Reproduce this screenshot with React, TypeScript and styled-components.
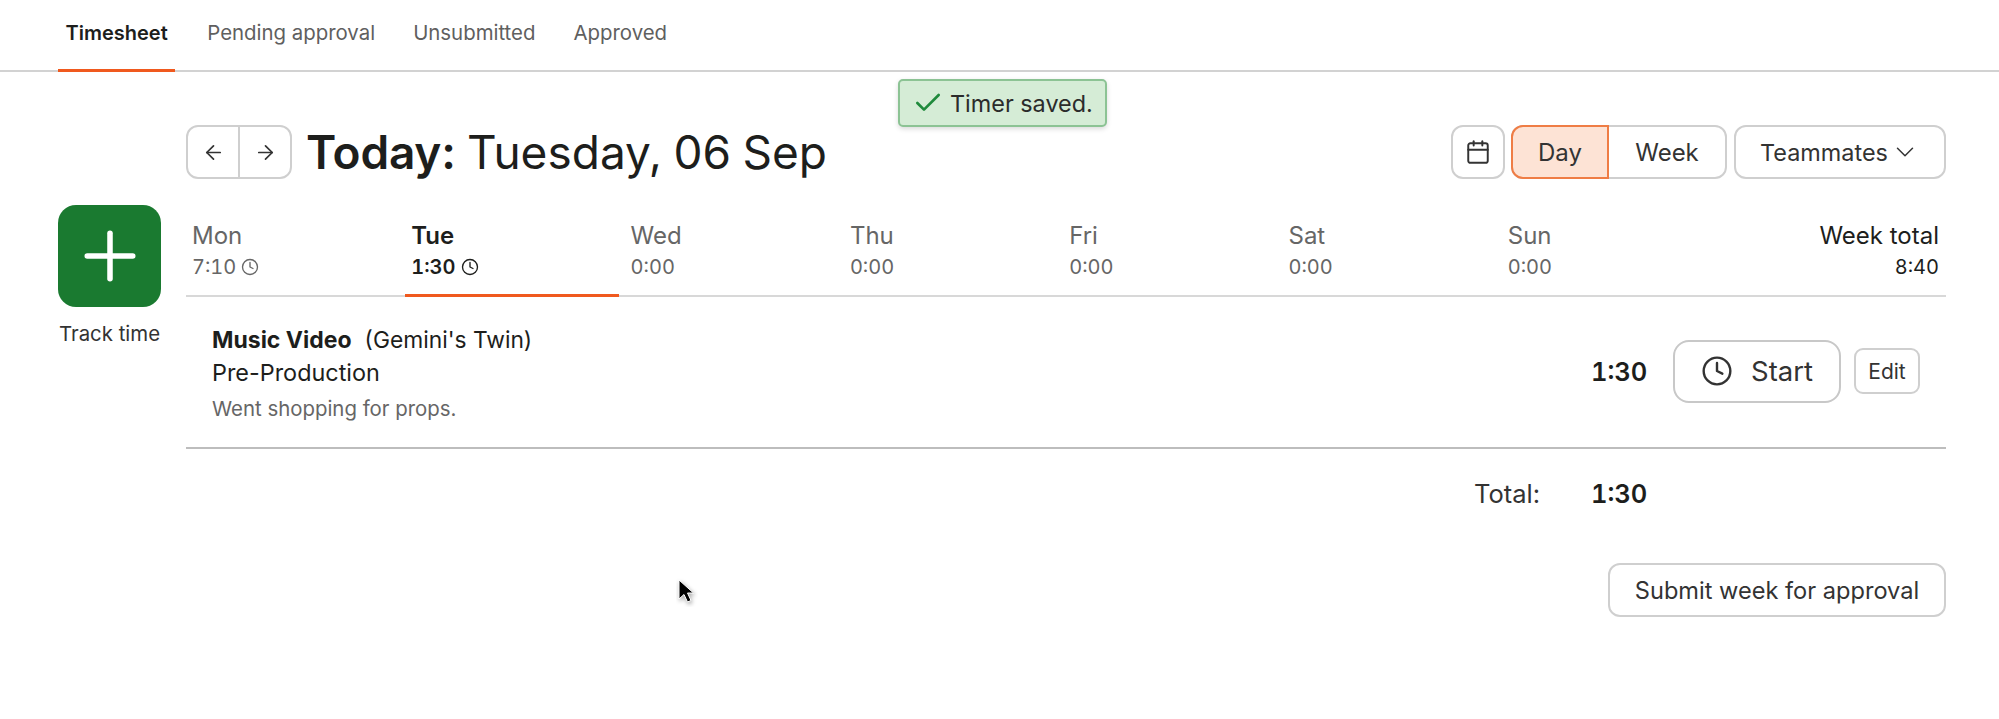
import React from "react";
import styled, { createGlobalStyle } from "styled-components";
import { ArrowLeft, ArrowRight, Calendar, Check, ChevronDown, Clock, Plus } from "lucide-react";

const Global = createGlobalStyle`
  html, body { margin: 0; padding: 0; background: #fff; }
  body { font-family: Inter, "Liberation Sans", sans-serif; color: #1d1e1c; width: 1999px; height: 719px; overflow: hidden; position: relative; }
  button { font-family: inherit; color: inherit; }
`;
const Tabs = styled.nav`
  height: 70px; padding-left: 58px; display: flex; align-items: stretch; border-bottom: 2px solid #d2d2d2; box-sizing: content-box;
`;
const Tab = styled.a<{ $active?: boolean }>`
  padding: 0 ${p => (p.$active ? 7.5 : 19)}px; height: 72px; margin-right: ${p => (p.$active ? 13 : 0)}px;
  display: flex; align-items: center; justify-content: center; padding-bottom: 4px; box-sizing: border-box;
  font-size: ${p => (p.$active ? 20 : 20.4)}px; font-weight: ${p => (p.$active ? 600 : 400)}; color: ${p => (p.$active ? "#1d1e1c" : "#5f5f5f")};
  border-bottom: 3px solid ${p => (p.$active ? "#f0591e" : "transparent")};
`;
const Toast = styled.div`
  position: absolute; left: 898px; top: 79px; width: 209px; height: 48px; box-sizing: border-box;
  display: flex; align-items: center; gap: 6px; padding-left: 12px; font-size: 23.4px; color: #2b2b2b;
  background: #d5ecd6; border: 2px solid #8cc394; border-radius: 5px; box-shadow: 0 2px 5px rgba(0,0,0,.15);
`;
const Body = styled.main`
  display: flex; gap: 25px; padding: 0 53px 0 58px;
`;
const Side = styled.aside`
  width: 103px; padding-top: 133px; display: flex; flex-direction: column; align-items: center; flex: none;
`;
const TrackButton = styled.button`
  width: 103px; height: 102px; border: 0; padding: 0; border-radius: 18px; background: #1a7a30; color: #fff; display: flex; align-items: center; justify-content: center;
`;
const TrackLabel = styled.div`
  margin-top: 14px; font-size: 20.4px; color: #333; white-space: nowrap;
`;
const Content = styled.section`
  flex: 1; padding-top: 53px; min-width: 0;
`;
const Header = styled.header`
  display: flex; align-items: center; height: 54px;
`;
const Group = styled.div`
  display: flex; height: 54px; border: 2px solid #cfcfcf; border-radius: 12px; box-sizing: border-box; background: #fff;
`;
const NavBtn = styled.button<{ $first?: boolean }>`
  width: ${p => (p.$first ? 50 : 52)}px; flex: none; border: 0; background: transparent; display: flex; align-items: center; justify-content: center; padding: 0; color: #333;
  & + & { border-left: 2px solid #cfcfcf; }
`;
const Title = styled.h1`
  margin: 0 0 0 14px; font-size: 46px; font-weight: 400; word-spacing: -1.5px; white-space: nowrap; flex: 1; color: #1d1e1c;
  strong { font-weight: 600; letter-spacing: -0.2px; }
`;
const IconBtn = styled.button`
  width: 54px; height: 54px; border: 2px solid #cfcfcf; border-radius: 12px; background: #fff; display: flex; align-items: center; justify-content: center; padding: 0; margin-right: 6px; color: #333;
`;
const Seg = styled.button<{ $active?: boolean }>`
  height: 54px; margin: -2px 0 -2px ${p => (p.$active ? -2 : 0)}px; width: ${p => (p.$active ? 98 : 116)}px; font-size: 24px; padding: 0; box-sizing: border-box;
  border: 2px solid ${p => (p.$active ? "#ef7d45" : "transparent")}; border-radius: ${p => (p.$active ? "12px 0 0 12px" : "0 12px 12px 0")};
  background: ${p => (p.$active ? "#fde3d5" : "transparent")}; color: #333;
`;
const Dropdown = styled.button`
  width: 212px; height: 54px; margin-left: 7px; border: 2px solid #cfcfcf; border-radius: 12px; background: #fff; font-size: 23.4px;
  display: flex; align-items: center; justify-content: center; gap: 0; padding: 0; color: #333;
  svg { margin-left: 2px; }
`;
const Days = styled.div`
  margin-top: 24px; display: flex; height: 92px; border-bottom: 2px solid #d8d8d8; box-sizing: content-box;
`;
const Day = styled.div<{ $active?: boolean }>`
  width: 219.3px; box-sizing: border-box; padding: 19px 0 0 6px; height: 94px; margin-bottom: -2px; flex: none; position: relative;
  color: ${p => (p.$active ? "#1d1e1c" : "#666")};
  font-weight: ${p => (p.$active ? 600 : 400)};
  ${p => p.$active && `&::after { content: ""; position: absolute; left: 0; right: 6px; bottom: 0; height: 3px; background: #f0591e; }`}
`;
const DayName = styled.div`
  font-size: 24px; line-height: 28px;
`;
const DayTime = styled.div<{ $end?: boolean }>`
  margin-top: 5px; font-size: 20px; line-height: 24px; display: flex; align-items: center; gap: 5px;
  font-variant-numeric: tabular-nums;
  justify-content: ${p => (p.$end ? "flex-end" : "flex-start")};
`;
const WeekTotal = styled.div`
  flex: 1; text-align: right; padding: 19px 7px 0 0; color: #1d1e1c;
`;
const Entry = styled.div`
  display: flex; align-items: center; height: 148px; padding: 0 26px 2px; border-bottom: 2px solid #bdbdbd;
`;
const EntryText = styled.div`
  flex: 1; padding-top: 4px;
`;
const ProjectLine = styled.div`
  font-size: 22.8px; line-height: 30px; strong { font-weight: 700; font-size: 23px; margin-right: 13px; }
`;
const TaskLine = styled.div`
  font-size: 23.4px; line-height: 30px; margin-top: 3px;
`;
const NoteLine = styled.div`
  font-size: 20.4px; line-height: 26px; margin-top: 8px; color: #666;
`;
const Hours = styled.div`
  font-size: 25.5px; font-weight: 600; width: 56px; text-align: left; white-space: nowrap; font-variant-numeric: tabular-nums;
`;
const StartBtn = styled.button`
  margin-left: 26px; width: 168px; height: 63px; border: 2px solid #c8c8c8; border-radius: 16px; background: #fff; font-size: 27.5px;
  display: flex; align-items: center; justify-content: center; gap: 18px; padding: 0; color: #333;
`;
const EditBtn = styled.button`
  margin-left: 13px; width: 66px; height: 46px; border: 2px solid #cfcfcf; border-radius: 9px; background: #fff; font-size: 21px; padding: 0; color: #333;
`;
const TotalRow = styled.div`
  display: flex; justify-content: flex-end; align-items: center; padding: 29px 299px 0 0; height: 30px;
`;
const TotalLabel = styled.div`
  font-size: 25.5px; width: 117px; color: #333;
`;
const Footer = styled.div`
  margin-top: 55px; display: flex; justify-content: flex-end;
`;
const Submit = styled.button`
  width: 338px; height: 54px; border: 2px solid #cfcfcf; border-radius: 12px; background: #fff; font-size: 23.6px; padding: 0; color: #333;
`;
const Cursor = styled.svg`
  position: absolute; left: 676px; top: 577px;
`;

const days = [
  ["Mon", "7:10", true], ["Tue", "1:30", true], ["Wed", "0:00"], ["Thu", "0:00"], ["Fri", "0:00"], ["Sat", "0:00"], ["Sun", "0:00"],
] as const;

export default function App() {
  return (
    <>
      <Global />
      <Tabs>
        <Tab $active>Timesheet</Tab>
        <Tab>Pending approval</Tab>
        <Tab>Unsubmitted</Tab>
        <Tab>Approved</Tab>
      </Tabs>
      <Toast><Check size={32} color="#1f8a3c" strokeWidth={2} />Timer saved.</Toast>
      <Body>
        <Side>
          <TrackButton aria-label="Track time"><Plus size={78} strokeWidth={1.7} /></TrackButton>
          <TrackLabel>Track time</TrackLabel>
        </Side>
        <Content>
          <Header>
            <Group>
              <NavBtn $first aria-label="Previous"><ArrowLeft size={23} strokeWidth={1.8} /></NavBtn>
              <NavBtn aria-label="Next"><ArrowRight size={23} strokeWidth={1.8} /></NavBtn>
            </Group>
            <Title><strong>Today:</strong> Tuesday, 06 Sep</Title>
            <IconBtn aria-label="Calendar"><Calendar size={26} strokeWidth={1.8} /></IconBtn>
            <Group>
              <Seg $active>Day</Seg>
              <Seg>Week</Seg>
            </Group>
            <Dropdown>Teammates <ChevronDown size={30} strokeWidth={1.2} /></Dropdown>
          </Header>
          <Days>
            {days.map(([name, time, clock], i) => (
              <Day key={name} $active={i === 1}>
                <DayName>{name}</DayName>
                <DayTime>{time}{clock && <Clock size={18} strokeWidth={1.8} />}</DayTime>
              </Day>
            ))}
            <WeekTotal>
              <DayName>Week total</DayName>
              <DayTime $end>8:40</DayTime>
            </WeekTotal>
          </Days>
          <Entry>
            <EntryText>
              <ProjectLine><strong>Music Video</strong>(Gemini's Twin)</ProjectLine>
              <TaskLine>Pre-Production</TaskLine>
              <NoteLine>Went shopping for props.</NoteLine>
            </EntryText>
            <Hours>1:30</Hours>
            <StartBtn><Clock size={32} strokeWidth={1.8} />Start</StartBtn>
            <EditBtn>Edit</EditBtn>
          </Entry>
          <TotalRow>
            <TotalLabel>Total:</TotalLabel>
            <Hours>1:30</Hours>
          </TotalRow>
          <Footer><Submit>Submit week for approval</Submit></Footer>
        </Content>
      </Body>
      <Cursor width="22" height="30" viewBox="0 0 22 30">
        <path d="M3 3 L3 22 L8 17.5 L11.5 25 L15 23.5 L11.5 16 L17.5 16 Z" fill="#000" stroke="#fff" strokeWidth="1" style={{ filter: "drop-shadow(1px 2px 2px rgba(0,0,0,.35))" }} />
      </Cursor>
    </>
  );
}
